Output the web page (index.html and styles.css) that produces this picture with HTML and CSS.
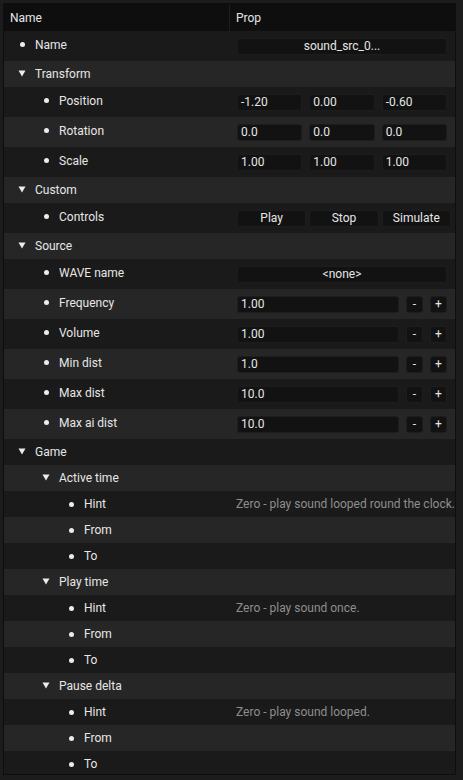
FILE: index.html
```html
<!DOCTYPE html>
<html>
<head>
<meta charset="utf-8">
<link rel="stylesheet" href="styles.css">
</head>
<body>
<div class="table">
  <div class="head">
    <div class="hc1">Name</div>
    <div class="hc2">Prop</div>
  </div>
  <div class="body">
    <div class="row w"><div class="c1 l0"><span class="mk"><span class="bul"></span></span>Name</div><div class="c2"><div class="field ctr full">sound_src_0...</div></div></div>
    <div class="row"><div class="c1 l0"><span class="mk"><svg class="tri" width="8" height="7" viewBox="0 0 8 7"><path d="M0.5 0.5 H7.5 L4 6.5 Z"/></svg></span>Transform</div><div class="c2"></div></div>
    <div class="row w"><div class="c1 l1"><span class="mk"><span class="bul"></span></span>Position</div><div class="c2"><div class="tri3"><div class="field">-1.20</div><div class="field">0.00</div><div class="field">-0.60</div></div></div></div>
    <div class="row w"><div class="c1 l1"><span class="mk"><span class="bul"></span></span>Rotation</div><div class="c2"><div class="tri3"><div class="field">0.0</div><div class="field">0.0</div><div class="field">0.0</div></div></div></div>
    <div class="row w"><div class="c1 l1"><span class="mk"><span class="bul"></span></span>Scale</div><div class="c2"><div class="tri3"><div class="field">1.00</div><div class="field">1.00</div><div class="field">1.00</div></div></div></div>
    <div class="row"><div class="c1 l0"><span class="mk"><svg class="tri" width="8" height="7" viewBox="0 0 8 7"><path d="M0.5 0.5 H7.5 L4 6.5 Z"/></svg></span>Custom</div><div class="c2"></div></div>
    <div class="row w"><div class="c1 l1"><span class="mk"><span class="bul"></span></span>Controls</div><div class="c2"><div class="btns"><div class="field ctr">Play</div><div class="field ctr">Stop</div><div class="field ctr">Simulate</div></div></div></div>
    <div class="row"><div class="c1 l0"><span class="mk"><svg class="tri" width="8" height="7" viewBox="0 0 8 7"><path d="M0.5 0.5 H7.5 L4 6.5 Z"/></svg></span>Source</div><div class="c2"></div></div>
    <div class="row w"><div class="c1 l1"><span class="mk"><span class="bul"></span></span>WAVE name</div><div class="c2"><div class="field ctr full">&lt;none&gt;</div></div></div>
    <div class="row w"><div class="c1 l1"><span class="mk"><span class="bul"></span></span>Frequency</div><div class="c2"><div class="spin"><div class="field">1.00</div><div class="field ctr sb">-</div><div class="field ctr sb">+</div></div></div></div>
    <div class="row w"><div class="c1 l1"><span class="mk"><span class="bul"></span></span>Volume</div><div class="c2"><div class="spin"><div class="field">1.00</div><div class="field ctr sb">-</div><div class="field ctr sb">+</div></div></div></div>
    <div class="row w"><div class="c1 l1"><span class="mk"><span class="bul"></span></span>Min dist</div><div class="c2"><div class="spin"><div class="field">1.0</div><div class="field ctr sb">-</div><div class="field ctr sb">+</div></div></div></div>
    <div class="row w"><div class="c1 l1"><span class="mk"><span class="bul"></span></span>Max dist</div><div class="c2"><div class="spin"><div class="field">10.0</div><div class="field ctr sb">-</div><div class="field ctr sb">+</div></div></div></div>
    <div class="row w"><div class="c1 l1"><span class="mk"><span class="bul"></span></span>Max ai dist</div><div class="c2"><div class="spin"><div class="field">10.0</div><div class="field ctr sb">-</div><div class="field ctr sb">+</div></div></div></div>
    <div class="row"><div class="c1 l0"><span class="mk"><svg class="tri" width="8" height="7" viewBox="0 0 8 7"><path d="M0.5 0.5 H7.5 L4 6.5 Z"/></svg></span>Game</div><div class="c2"></div></div>
    <div class="row"><div class="c1 l1"><span class="mk"><svg class="tri" width="8" height="7" viewBox="0 0 8 7"><path d="M0.5 0.5 H7.5 L4 6.5 Z"/></svg></span>Active time</div><div class="c2"></div></div>
    <div class="row"><div class="c1 l2"><span class="mk"><span class="bul"></span></span>Hint</div><div class="c2 hint">Zero - play sound looped round the clock.</div></div>
    <div class="row"><div class="c1 l2"><span class="mk"><span class="bul"></span></span>From</div><div class="c2"></div></div>
    <div class="row"><div class="c1 l2"><span class="mk"><span class="bul"></span></span>To</div><div class="c2"></div></div>
    <div class="row"><div class="c1 l1"><span class="mk"><svg class="tri" width="8" height="7" viewBox="0 0 8 7"><path d="M0.5 0.5 H7.5 L4 6.5 Z"/></svg></span>Play time</div><div class="c2"></div></div>
    <div class="row"><div class="c1 l2"><span class="mk"><span class="bul"></span></span>Hint</div><div class="c2 hint">Zero - play sound once.</div></div>
    <div class="row"><div class="c1 l2"><span class="mk"><span class="bul"></span></span>From</div><div class="c2"></div></div>
    <div class="row"><div class="c1 l2"><span class="mk"><span class="bul"></span></span>To</div><div class="c2"></div></div>
    <div class="row"><div class="c1 l1"><span class="mk"><svg class="tri" width="8" height="7" viewBox="0 0 8 7"><path d="M0.5 0.5 H7.5 L4 6.5 Z"/></svg></span>Pause delta</div><div class="c2"></div></div>
    <div class="row"><div class="c1 l2"><span class="mk"><span class="bul"></span></span>Hint</div><div class="c2 hint">Zero - play sound looped.</div></div>
    <div class="row"><div class="c1 l2"><span class="mk"><span class="bul"></span></span>From</div><div class="c2"></div></div>
    <div class="row"><div class="c1 l2"><span class="mk"><span class="bul"></span></span>To</div><div class="c2"></div></div>
  </div>
</div>
</body>
</html>
```

FILE: styles.css
```css
html, body {
  margin: 0;
  padding: 0;
  background: #1c1c1c;
  height: 780px;
  overflow: hidden;
}
body {
  font-family: Roboto, "Liberation Sans", sans-serif;
  font-size: 12px;
  color: #e6e6e6;
}
.table {
  margin: 3px 7px 0 3px;
  border: 1px solid #0e0e0e;
  height: 770px;
  overflow: hidden;
  background: #1a1a1a;
}
.head {
  display: grid;
  grid-template-columns: 226px 1fr;
  height: 27px;
  background: #0e0e0e;
}
.hc1 {
  padding-left: 6px;
  display: flex;
  align-items: center;
  border-right: 1px solid #1e1e1e;
}
.hc2 {
  padding-left: 6px;
  display: flex;
  align-items: center;
}
.row {
  display: grid;
  grid-template-columns: 226px 1fr;
  height: 26px;
  background: #1a1a1a;
}
.row.w {
  height: 30px;
}
.body .row:nth-child(even) {
  background: #262626;
}
.c1 {
  display: flex;
  align-items: center;
  white-space: nowrap;
}
.row.w .c1 {
  padding-bottom: 3px;
}
.c1.l0 { padding-left: 12px; }
.c1.l1 { padding-left: 36px; }
.c1.l2 { padding-left: 61px; }
.mk {
  width: 12px;
  margin-right: 7px;
  display: flex;
  justify-content: center;
  align-items: center;
}
.bul {
  width: 5px;
  height: 5px;
  border-radius: 50%;
  background: #ececec;
}
.tri {
  display: block;
  fill: #ececec;
  margin-top: -1px;
}
.c2 {
  padding-left: 7px;
  display: flex;
  align-items: center;
  white-space: nowrap;
  overflow: visible;
}
.hint {
  color: #8e8e8e;
  padding-left: 6px;
}
.field {
  height: 17px;
  box-sizing: border-box;
  background: #121212;
  border: 1px solid #1d1d1d;
  border-radius: 3px;
  padding-left: 3px;
  display: flex;
  align-items: center;
  color: #e6e6e6;
}
.field.ctr {
  justify-content: center;
  padding-left: 0;
}
.full {
  width: 210px;
}
.tri3 {
  display: grid;
  grid-template-columns: repeat(3, 1fr);
  column-gap: 7px;
  width: 210px;
}
.btns {
  display: grid;
  grid-template-columns: repeat(3, 1fr);
  column-gap: 3px;
  width: 214px;
}
.spin {
  display: grid;
  grid-template-columns: 162px 17px 17px;
  column-gap: 7px;
  width: 210px;
}
.sb {
  font-size: 12px;
}
```
